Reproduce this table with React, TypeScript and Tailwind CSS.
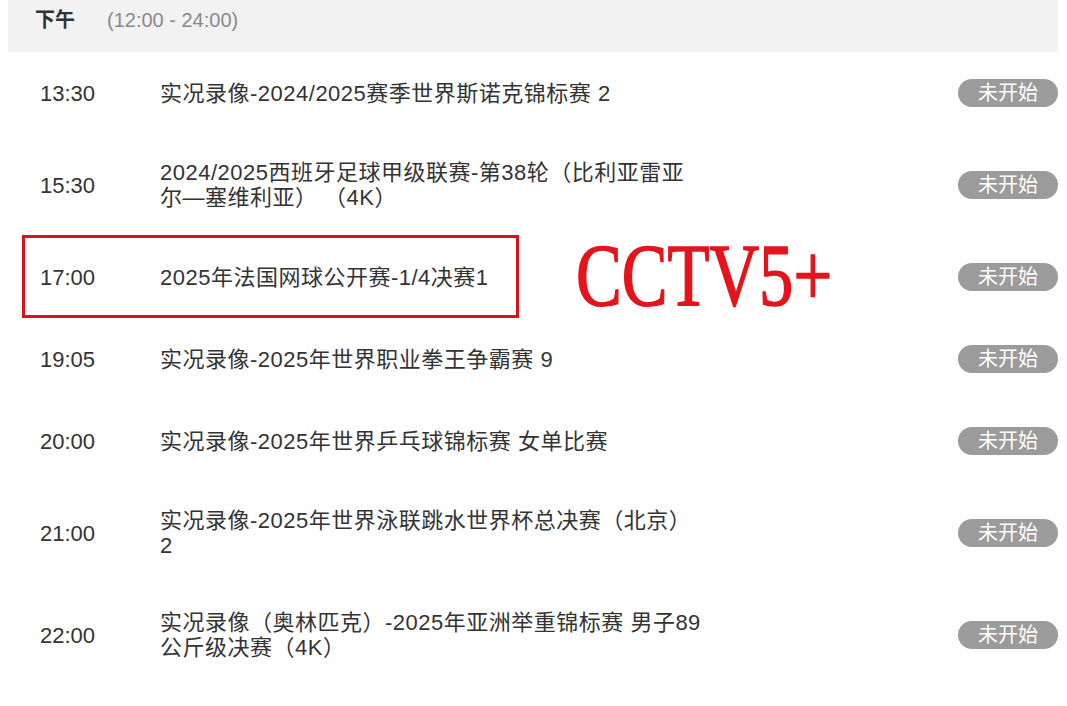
const rows = [
  { time: "13:30", lines: ["实况录像-2024/2025赛季世界斯诺克锦标赛 2"] },
  { time: "15:30", lines: ["2024/2025西班牙足球甲级联赛-第38轮（比利亚雷亚", "尔—塞维利亚） （4K）"] },
  { time: "17:00", lines: ["2025年法国网球公开赛-1/4决赛1"], marked: true },
  { time: "19:05", lines: ["实况录像-2025年世界职业拳王争霸赛 9"] },
  { time: "20:00", lines: ["实况录像-2025年世界乒乓球锦标赛 女单比赛"] },
  { time: "21:00", lines: ["实况录像-2025年世界泳联跳水世界杯总决赛（北京）", "2"] },
  { time: "22:00", lines: ["实况录像（奥林匹克）-2025年亚洲举重锦标赛 男子89", "公斤级决赛（4K）"] },
];

const font = { fontFamily: '"Liberation Sans", "Noto Sans CJK SC", sans-serif' };

export default function App() {
  return (
    <div className="w-[1067px] h-[706px] overflow-hidden bg-white" style={font}>
      <div className="pl-[8px] pr-[9px]">
        {/* Section header */}
        <div className="h-[52px] bg-[#f2f2f2] flex items-start pt-[8px] pl-[27px] text-[20px] leading-[24px]">
          <span className="font-bold text-[#333]">下午</span>
          <span className="ml-[32px] text-[#8a8a8a]">(12:00 - 24:00)</span>
        </div>

        {/* Schedule rows */}
        {rows.map((row) => (
          <div key={row.time} className="relative flex items-center min-h-[82px] py-[26px] pl-[32px] text-[#333] text-[22px] leading-[25px]">
            <div className="w-[120px] shrink-0">{row.time}</div>
            <div className="w-[560px] shrink-0 tracking-[0.5px]">
              {row.lines.map((line, i) => (
                <div key={i} className="whitespace-pre">{line}</div>
              ))}
            </div>
            <div className="ml-auto w-[100px] h-[28px] rounded-full bg-[#9b9b9b] text-white text-[20px] leading-[28px] text-center">
              未开始
            </div>
            {row.marked && (
              <>
                <div className="absolute left-[14px] top-[-1px] w-[497px] h-[83px] border-[3px] border-[#d4161c]" />
                <div
                  className="absolute left-[568px] top-[0px] text-[88px] leading-[80px] text-[#e3141b] origin-left scale-x-[0.78] [-webkit-text-stroke:1.5px_#e3141b]"
                  style={{ fontFamily: '"Liberation Serif", serif' }}
                >
                  CCTV5+
                </div>
              </>
            )}
          </div>
        ))}
      </div>
    </div>
  );
}
